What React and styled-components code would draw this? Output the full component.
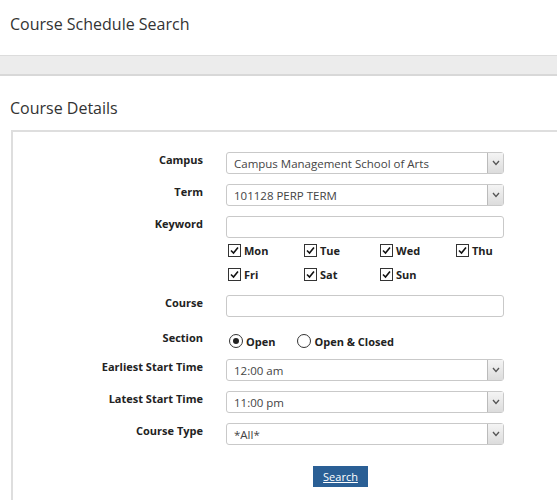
import React from "react";
import styled, { createGlobalStyle } from "styled-components";

const Global = createGlobalStyle`
  body { margin: 0; font-family: "Open Sans", "Noto Sans", sans-serif; background: #fff; color: #222; }
`;

const Page = styled.div`width: 557px; height: 500px; overflow: hidden;`;
const Header = styled.div`
  height: 55px; padding-left: 10px; display: flex; align-items: flex-start;
  font-size: 16px; line-height: 1; padding-top: 16px; box-sizing: border-box; color: #333;
`;
const Band = styled.div`
  height: 18px; background: #ececec; border-top: 1px solid #dcdcdc; border-bottom: 2px solid #d8d8d8;
`;
const SectionTitle = styled.div`
  font-size: 16px; color: #333; padding: 24px 0 0 10px; height: 30px; line-height: 1;
`;
const Panel = styled.div`
  margin-left: 11px; width: 600px; border: 2px solid #dedede; border-right: none; border-bottom: none;
  padding-top: 20px; height: 380px; box-sizing: border-box;
`;
const Form = styled.div`
  display: grid; grid-template-columns: 190px 278px; column-gap: 23px; row-gap: 10px;
`;
const Label = styled.div`
  text-align: right; font-size: 11px; font-weight: bold; color: #222; padding-top: ${p => p.$top ?? 0}px;
`;
const Select = styled.div`
  height: 22px; border: 1px solid #c9c9c9; border-radius: 3px; box-sizing: border-box;
  display: flex; align-items: center; font-size: 11.5px; color: #444; position: relative; padding-left: 7px;
`;
const Arrow = styled.div`
  position: absolute; right: 0; top: 0; bottom: 0; width: 15px; border-left: 1px solid #bbb;
  background: linear-gradient(#f4f4f4, #dcdcdc); display: flex; align-items: center; justify-content: center;
`;
const Input = styled.div`
  height: 22px; border: 1px solid #c9c9c9; border-radius: 3px; box-sizing: border-box;
`;
const Days = styled.div`
  display: grid; grid-template-columns: repeat(4, 76px); row-gap: 8px; margin-top: 4px; padding-left: 2px; padding-bottom: 3px;
`;
const Check = styled.label`
  display: flex; align-items: center; gap: 3px; font-size: 11px; font-weight: bold; height: 16px;
`;
const Box = styled.span`
  width: 11px; height: 11px; border: 1px solid #333; display: flex; align-items: center; justify-content: center;
`;
const Radios = styled.div`display: flex; gap: 22px; padding-left: 3px; padding-top: 6px; height: 22px; box-sizing: border-box;`;
const Radio = styled.span`
  width: 12px; height: 12px; border: 1px solid #333; border-radius: 50%; display: flex; align-items: center; justify-content: center;
  &::after { content: ""; width: 6px; height: 6px; border-radius: 50%; background: ${p => p.$on ? "#222" : "transparent"}; }
`;
const ButtonRow = styled.div`display: flex; padding-left: 300px; padding-top: 21px;`;
const Button = styled.div`
  width: 55px; height: 21px; background: #2a5f95; color: #fff; font-size: 11px; text-decoration: underline;
  display: flex; align-items: center; justify-content: center;
`;

const Tick = () => (
  <svg width="9" height="9" viewBox="0 0 9 9"><path d="M1 4.5 L3.5 7 L8 1.5" stroke="#111" strokeWidth="1.6" fill="none" /></svg>
);
const Caret = () => (
  <svg width="8" height="6" viewBox="0 0 8 6"><path d="M1 1 L4 4.5 L7 1" stroke="#555" strokeWidth="1.3" fill="none" /></svg>
);
const Dropdown = ({ value }) => (<Select>{value}<Arrow><Caret /></Arrow></Select>);

export default function App() {
  const days = ["Mon", "Tue", "Wed", "Thu", "Fri", "Sat", "Sun"];
  return (
    <Page>
      <Global />
      <Header>Course Schedule Search</Header>
      <Band />
      <SectionTitle>Course Details</SectionTitle>
      <Panel>
        <Form>
          <Label>Campus</Label><Dropdown value="Campus Management School of Arts" />
          <Label>Term</Label><Dropdown value="101128 PERP TERM" />
          <Label>Keyword</Label>
          <div>
            <Input />
            <Days>
              {days.map(d => <Check key={d}><Box><Tick /></Box>{d}</Check>)}
            </Days>
          </div>
          <Label>Course</Label><Input />
          <Label $top={3}>Section</Label>
          <Radios>
            <Check><Radio $on />Open</Check>
            <Check><Radio />Open &amp; Closed</Check>
          </Radios>
          <Label>Earliest Start Time</Label><Dropdown value="12:00 am" />
          <Label>Latest Start Time</Label><Dropdown value="11:00 pm" />
          <Label>Course Type</Label><Dropdown value="*All*" />
        </Form>
        <ButtonRow><Button>Search</Button></ButtonRow>
      </Panel>
    </Page>
  );
}
